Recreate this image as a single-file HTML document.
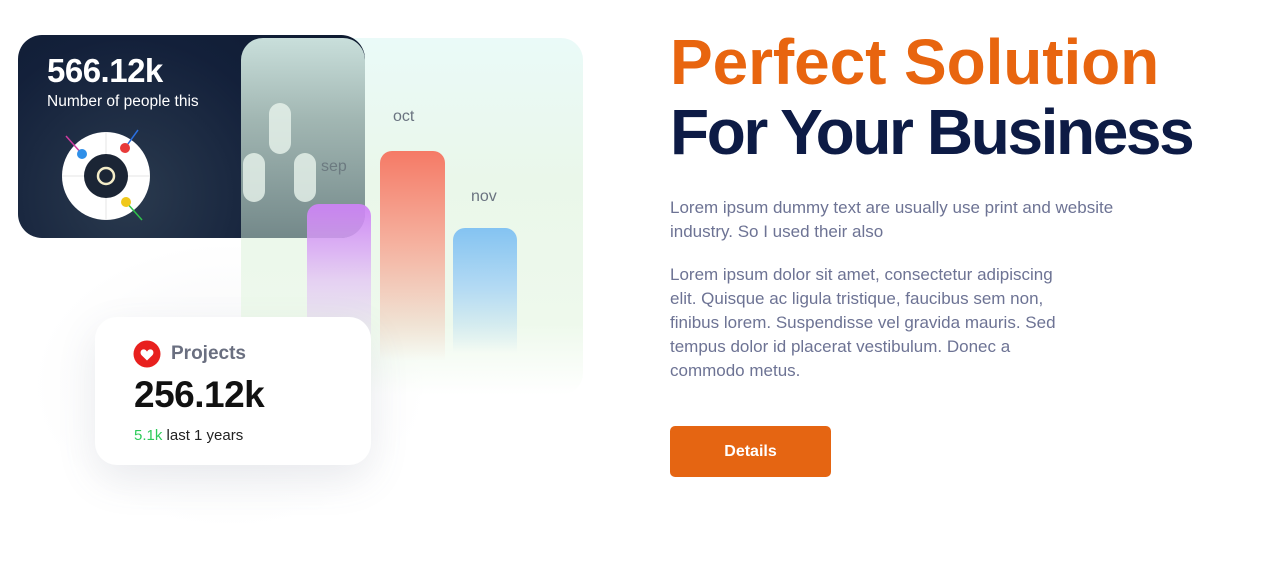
<!DOCTYPE html>
<html><head><meta charset="utf-8"><style>
*{margin:0;padding:0;box-sizing:border-box}
body{width:1264px;height:579px;background:#fff;position:relative;overflow:hidden;font-family:"Liberation Sans",sans-serif}
.a{position:absolute}
.t{white-space:nowrap}
</style></head><body>
<!-- soft shadow -->
<div class="a" style="left:30px;top:240px;width:400px;height:290px;border-radius:120px;background:radial-gradient(ellipse at center,rgba(120,130,150,0.07) 0%,rgba(255,255,255,0) 70%)"></div>
<!-- green panel -->
<div class="a" style="left:241px;top:38px;width:342px;height:357px;border-radius:22px;background:linear-gradient(180deg,#eafaf8 0%,#eaf7ea 40%,#eef9ec 80%,rgba(255,255,255,0) 100%)"></div>
<!-- dark card -->
<div class="a" style="left:18px;top:35px;width:347px;height:203px;border-radius:24px;background:radial-gradient(circle at 110px 160px,#2a3a4e 0%,#13203a 55%,#0d1a2f 100%);overflow:hidden">
  <div class="a" style="left:223px;top:3px;width:124px;height:200px;border-radius:22px 22px 24px 0;background:linear-gradient(180deg,#c9dfdb 0%,#a2b7b3 40%,#74898a 100%)"></div>
  <div class="a" style="left:251px;top:68px;width:22px;height:51px;border-radius:11px;background:rgba(232,244,236,0.8)"></div>
  <div class="a" style="left:225px;top:118px;width:22px;height:49px;border-radius:11px;background:rgba(232,244,236,0.8)"></div>
  <div class="a" style="left:276px;top:118px;width:22px;height:49px;border-radius:11px;background:rgba(232,244,236,0.8)"></div>
</div>
<div class="a t" style="left:47px;top:52px;color:#fff;font-size:33px;font-weight:bold;letter-spacing:-0.5px">566.12k</div>
<div class="a t" style="left:47px;top:93px;color:#fff;font-size:15.5px">Number of people this</div>
<svg class="a" style="left:55px;top:125px" width="100" height="100" viewBox="55 125 100 100">
  <circle cx="106" cy="176" r="44" fill="#fff"/>
  <line x1="106" y1="132" x2="106" y2="220" stroke="#e6e6e6" stroke-width="1"/>
  <line x1="62" y1="176" x2="150" y2="176" stroke="#e6e6e6" stroke-width="1"/>
  <circle cx="106" cy="176" r="22" fill="#1b2535"/>
  <circle cx="106" cy="176" r="8" fill="none" stroke="#f3ecc8" stroke-width="2.5"/>
  <line x1="66" y1="136" x2="82" y2="154" stroke="#d03aa0" stroke-width="1.5"/>
  <circle cx="82" cy="154" r="5" fill="#2f8fe8"/>
  <line x1="138" y1="130" x2="125" y2="148" stroke="#2a6fe0" stroke-width="1.5"/>
  <circle cx="125" cy="148" r="5" fill="#e83a3a"/>
  <line x1="126" y1="202" x2="142" y2="220" stroke="#2fc24a" stroke-width="1.5"/>
  <circle cx="126" cy="202" r="5" fill="#f0c81a"/>
</svg>
<!-- bars -->
<div class="a" style="left:307px;top:204px;width:64px;height:150px;border-radius:12px 12px 0 0;background:linear-gradient(180deg,rgba(205,130,245,0.95) 0%,rgba(225,190,245,0.7) 50%,rgba(255,255,255,0) 100%)"></div>
<div class="a" style="left:380px;top:151px;width:65px;height:210px;border-radius:12px 12px 0 0;background:linear-gradient(180deg,#f57a66 0%,#f5b2a0 45%,rgba(255,240,235,0) 100%)"></div>
<div class="a" style="left:453px;top:228px;width:64px;height:125px;border-radius:12px 12px 0 0;background:linear-gradient(180deg,#84c3f2 0%,#b5dbf3 50%,rgba(255,255,255,0) 100%)"></div>
<div class="a t" style="left:321px;top:158px;color:#6c7a80;font-size:16px">sep</div>
<div class="a t" style="left:393px;top:108px;color:#6a7380;font-size:16px">oct</div>
<div class="a t" style="left:471px;top:188px;color:#6a7380;font-size:16px">nov</div>
<!-- projects card -->
<div class="a" style="left:95px;top:317px;width:276px;height:148px;border-radius:22px;background:#fff;box-shadow:0 15px 40px rgba(100,110,130,0.12)"></div>
<svg class="a" style="left:133px;top:340px" width="28" height="28" viewBox="0 0 28 28"><circle cx="14" cy="14" r="13.5" fill="#e8201e"/><path d="M14 20.5 L8.6 15.2 C6.6 13.2 7.6 9.4 10.6 9.4 C12.2 9.4 13.3 10.4 14 11.6 C14.7 10.4 15.8 9.4 17.4 9.4 C20.4 9.4 21.4 13.2 19.4 15.2 Z" fill="#fff"/></svg>
<div class="a t" style="left:171px;top:343px;color:#6a6f80;font-size:19px;font-weight:bold">Projects</div>
<div class="a t" style="left:134px;top:374px;color:#111;font-size:37px;font-weight:bold;letter-spacing:-0.5px">256.12k</div>
<div class="a t" style="left:134px;top:427px;color:#222;font-size:15px"><span style="color:#2ecb5a">5.1k</span> last 1 years</div>
<!-- right -->
<div class="a t" style="left:670px;top:25px;color:#e8650f;font-size:64px;font-weight:bold;letter-spacing:-0.1px;line-height:74px">Perfect Solution</div>
<div class="a t" style="left:670px;top:95px;color:#0d1b45;font-size:64px;font-weight:bold;letter-spacing:-2.4px;line-height:74px">For Your Business</div>
<div class="a t" style="left:670px;top:196px;color:#6d7394;font-size:17px;line-height:24px">Lorem ipsum dummy text are usually use print and website<br>industry. So I used their also</div>
<div class="a t" style="left:670px;top:263px;color:#6d7394;font-size:17px;line-height:24px">Lorem ipsum dolor sit amet, consectetur adipiscing<br>elit. Quisque ac ligula tristique, faucibus sem non,<br>finibus lorem. Suspendisse vel gravida mauris. Sed<br>tempus dolor id placerat vestibulum. Donec a<br>commodo metus.</div>
<div class="a" style="left:670px;top:426px;width:161px;height:51px;border-radius:5px;background:#e56512;color:#fff;font-size:16px;font-weight:bold;text-align:center;line-height:51px">Details</div>
</body></html>
